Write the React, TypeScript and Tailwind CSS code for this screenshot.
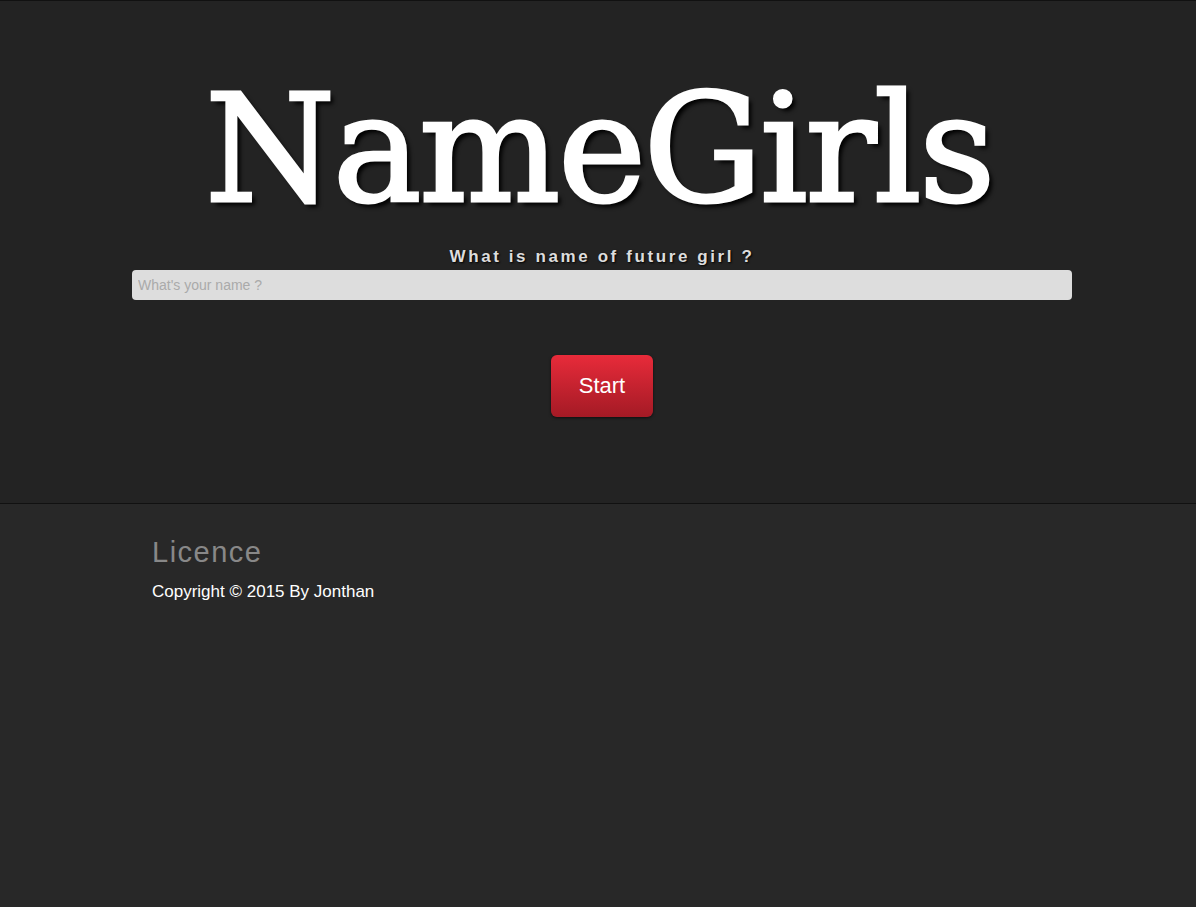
export default function App() {
  return (
    <div className="min-h-[907px] bg-[#282828] font-['Liberation_Sans',Arial,sans-serif]">
      <header className="border-t border-[#111] border-b border-b-[#111] bg-[#232323] h-[504px] pl-[8px] flex flex-col items-center">
        <h1 className="mt-[67px] -ml-[6px] text-white text-[149px] leading-[164px] font-['DejaVu_Serif',serif] tracking-[-2.5px] [-webkit-text-stroke:3px_white] [text-shadow:4px_4px_4px_#000]">
          NameGirls
        </h1>
        <p className="mt-[12px] text-[17px] font-bold tracking-[2.6px] text-[#dddddd] [text-shadow:1px_1px_2px_#000]">
          What is name of future girl ?
        </p>
        <input
          type="text"
          placeholder="What's your name ?"
          className="mt-0 w-[940px] h-[30px] rounded-[4px] bg-[#dddddd] px-[6px] text-[14px] text-[#555] placeholder:text-[#aaa] outline-none"
        />
        <button className="mt-[55px] w-[102px] h-[62px] rounded-[6px] bg-gradient-to-b from-[#e82b3a] to-[#a41a25] text-white text-[22px] shadow-[0_1px_3px_rgba(0,0,0,0.6)]">
          Start
        </button>
      </header>
      <footer className="w-[892px] mx-auto pt-[30px]">
        <h2 className="text-[29px] leading-[36px] tracking-[1.5px] text-[#888]">Licence</h2>
        <p className="mt-[9px] text-[17px] text-white">Copyright © 2015 By Jonthan</p>
      </footer>
    </div>
  );
}
